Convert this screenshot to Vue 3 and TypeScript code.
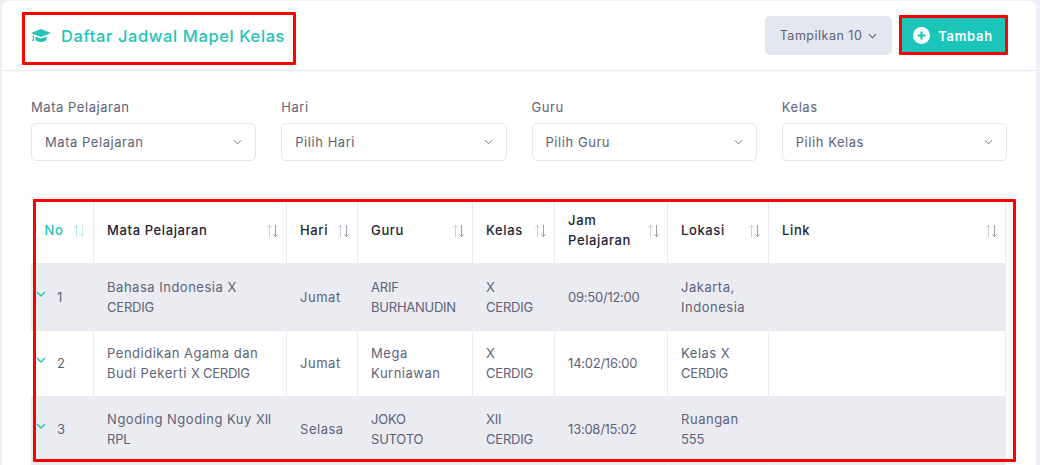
<script setup lang="ts">
interface Row { no: number; mapel: string; hari: string; guru: string; kelas: string; jam: string; lokasi: string }
const filters = [
  { label: 'Mata Pelajaran', value: 'Mata Pelajaran' },
  { label: 'Hari', value: 'Pilih Hari' },
  { label: 'Guru', value: 'Pilih Guru' },
  { label: 'Kelas', value: 'Pilih Kelas' },
]
const cols = ['No', 'Mata Pelajaran', 'Hari', 'Guru', 'Kelas', 'Jam Pelajaran', 'Lokasi', 'Link']
const rows: Row[] = [
  { no: 1, mapel: 'Bahasa Indonesia X CERDIG', hari: 'Jumat', guru: 'ARIF BURHANUDIN', kelas: 'X CERDIG', jam: '09:50/12:00', lokasi: 'Jakarta, Indonesia' },
  { no: 2, mapel: 'Pendidikan Agama dan Budi Pekerti X CERDIG', hari: 'Jumat', guru: 'Mega Kurniawan', kelas: 'X CERDIG', jam: '14:02/16:00', lokasi: 'Kelas X CERDIG' },
  { no: 3, mapel: 'Ngoding Ngoding Kuy XII RPL', hari: 'Selasa', guru: 'JOKO SUTOTO', kelas: 'XII CERDIG', jam: '13:08/15:02', lokasi: 'Ruangan 555' },
]
const words = (s: string) => s.split(' ').map((t) => ({ t: t + ' ', caps: t === t.toUpperCase() }))
const cells = (r: Row) => [r.mapel, r.hari, r.guru, r.kelas, r.jam, r.lokasi]
</script>

<template>
  <div class="page">
    <div class="card">
      <header class="head">
        <h1 class="title">
          <svg class="cap" viewBox="0 0 640 512" width="20" height="16"><path fill="currentColor" d="M320 32 0 160l64 26v70c-10 6-16 16-16 28 0 11 6 21 14 27L40 416h64L82 311c8-6 14-16 14-27 0-12-6-22-16-28v-63l240 95 320-128L320 32zM144 268l-0 100c0 40 79 80 176 80s176-40 176-80V268l-176 70-176-70z"/></svg>
          Daftar Jadwal Mapel Kelas
        </h1>
        <div class="actions">
          <button class="show">Tampilkan 10
            <svg width="9" height="6" viewBox="0 0 10 6"><path d="M1 1l4 4 4-4" fill="none" stroke="currentColor" stroke-width="1.2"/></svg>
          </button>
          <button class="add">
            <svg width="17" height="17" viewBox="0 0 17 17"><circle cx="8.5" cy="8.5" r="8.5" fill="#fff"/><path d="M8.5 4.5v8M4.5 8.5h8" stroke="#1cc5b9" stroke-width="2.2"/></svg>
            Tambah
          </button>
        </div>
      </header>
      <section class="filters">
        <div v-for="f in filters" :key="f.label" class="field">
          <label>{{ f.label }}</label>
          <div class="select">
            <span>{{ f.value }}</span>
            <svg width="9" height="6" viewBox="0 0 10 6"><path d="M1 1l4 4 4-4" fill="none" stroke="#6e7690" stroke-width="1.1"/></svg>
          </div>
        </div>
      </section>
      <div class="tablewrap">
        <table>
          <colgroup>
            <col class="c1" /><col class="c2" /><col class="c3" /><col class="c4" /><col class="c5" /><col class="c6" /><col class="c7" /><col />
          </colgroup>
          <thead>
            <tr>
              <th v-for="(c, i) in cols" :key="c" :class="{ active: i === 0 }">
                <div class="th">
                  <span>{{ c }}</span>
                  <svg class="sort" width="13" height="14" viewBox="0 0 13 14"><path d="M3.5 13V1.5M1.3 3.7l2.2-2.2 2.2 2.2" fill="none" stroke="currentColor" stroke-width="1" opacity=".35"/><path d="M9.5 1v11.5M7.3 10.3l2.2 2.2 2.2-2.2" fill="none" stroke="currentColor" stroke-width="1" :opacity="i === 0 ? .3 : .7"/></svg>
                </div>
              </th>
            </tr>
          </thead>
          <tbody>
            <tr v-for="r in rows" :key="r.no">
              <td class="no">
                <svg class="exp" width="10" height="6" viewBox="0 0 10 6"><path d="M1 1l4 4 4-4" fill="none" stroke="#1cc5b9" stroke-width="1.4"/></svg>
                {{ r.no }}
              </td>
              <td v-for="(v, i) in cells(r)" :key="i"><span v-for="(w, k) in words(v)" :key="k" :class="{ caps: w.caps }">{{ w.t }}</span></td>
              <td></td>
            </tr>
            <tr class="next">
              <td v-for="c in cols" :key="c"></td>
            </tr>
          </tbody>
        </table>
      </div>
    </div>
    <div class="mark m1"></div>
    <div class="mark m2"></div>
    <div class="mark m3"></div>
  </div>
</template>

<style>
html, body { margin: 0; background: #eef0f7; overflow: hidden; }
</style>

<style scoped>
.page { position: relative; width: 1040px; height: 465px; overflow: hidden; padding: 1px 4px 0 2px; box-sizing: border-box; font-family: Inter, "Liberation Sans", sans-serif; color: #5e6278; }
.card { background: #fff; border-radius: 6px 6px 0 0; height: 600px; }
.head { display: flex; align-items: center; justify-content: space-between; height: 69px; border-bottom: 1px solid #e9ebf3; padding: 0 29px; }
.title { display: flex; align-items: center; gap: 10px; margin: 0; font-size: 16.5px; font-weight: 500; color: #25c3b8; letter-spacing: .6px; }
.cap { margin-top: 1px; }
.actions { display: flex; gap: 7px; align-items: center; }
button { font-family: inherit; border: 0; border-radius: 5px; height: 39px; display: flex; align-items: center; }
.show { width: 127px; background: #e4e6f0; color: #5e6278; font-size: 12.5px; letter-spacing: .5px; justify-content: center; gap: 6px; }
.add { width: 108px; background: #1cc5b9; color: #fff; font-size: 13px; font-weight: 600; letter-spacing: .7px; justify-content: center; gap: 8px; }
.filters { display: grid; grid-template-columns: repeat(4, 225.25px); column-gap: 25px; padding: 28px 29px 0; }
.field label { display: block; font-size: 13px; line-height: 16px; margin-bottom: 8px; letter-spacing: .55px; }
.select { height: 36px; border: 1px solid #e4e6f0; border-radius: 5px; display: flex; align-items: center; justify-content: space-between; padding: 0 13px; font-size: 13px; letter-spacing: .55px; }
.tablewrap { margin: 36px 0 0 29px; width: 975px; }
table { width: 100%; border-collapse: collapse; table-layout: fixed; }
.c1 { width: 62px; } .c2 { width: 193px; } .c3 { width: 71px; } .c4 { width: 115px; } .c5 { width: 82px; } .c6 { width: 113px; } .c7 { width: 101px; }
th { height: 65px; padding: 0 7px 0 13.6px; border-right: 1px solid #e9ebf3; border-top: 1px solid #e9ebf3; text-align: left; font-size: 13px; font-weight: 500; color: #1c2333; line-height: 20px; box-sizing: border-box; letter-spacing: .6px; }
th.active { color: #25c3b8; }
th.active .sort { color: #25c3b8; }
.th { display: flex; align-items: center; justify-content: space-between; gap: 4px; }
.sort { color: #70768a; flex: none; margin-top: 2px; }
td { padding: 0 13px 0 13.6px; border-right: 1px solid #e9ebf3; font-size: 13px; line-height: 20px; color: #5e6278; letter-spacing: .5px; box-sizing: border-box; }
td .caps { letter-spacing: -.25px; }
tbody tr:nth-child(1) td { height: 68px; }
tbody tr:nth-child(2) td { height: 65px; }
tbody tr:nth-child(3) td { height: 66px; }
tbody tr:nth-child(odd) td { background: #ebecf2; border-right-color: #ebecf2; }
tbody tr.next td { height: 40px; background: #ebecf2; border-right-color: #f2f3f7; }
td.no { padding-left: 26px; position: relative; letter-spacing: 0; }
.exp { position: absolute; left: 5px; top: calc(50% - 6px); }
.mark { position: absolute; border: 3px solid #f00; box-sizing: border-box; pointer-events: none; border-radius: 1px; }
.m1 { left: 22px; top: 12px; width: 274px; height: 53px; }
.m2 { left: 899px; top: 15px; width: 109px; height: 40px; }
.m3 { left: 33px; top: 199px; width: 983px; height: 263px; }
</style>
